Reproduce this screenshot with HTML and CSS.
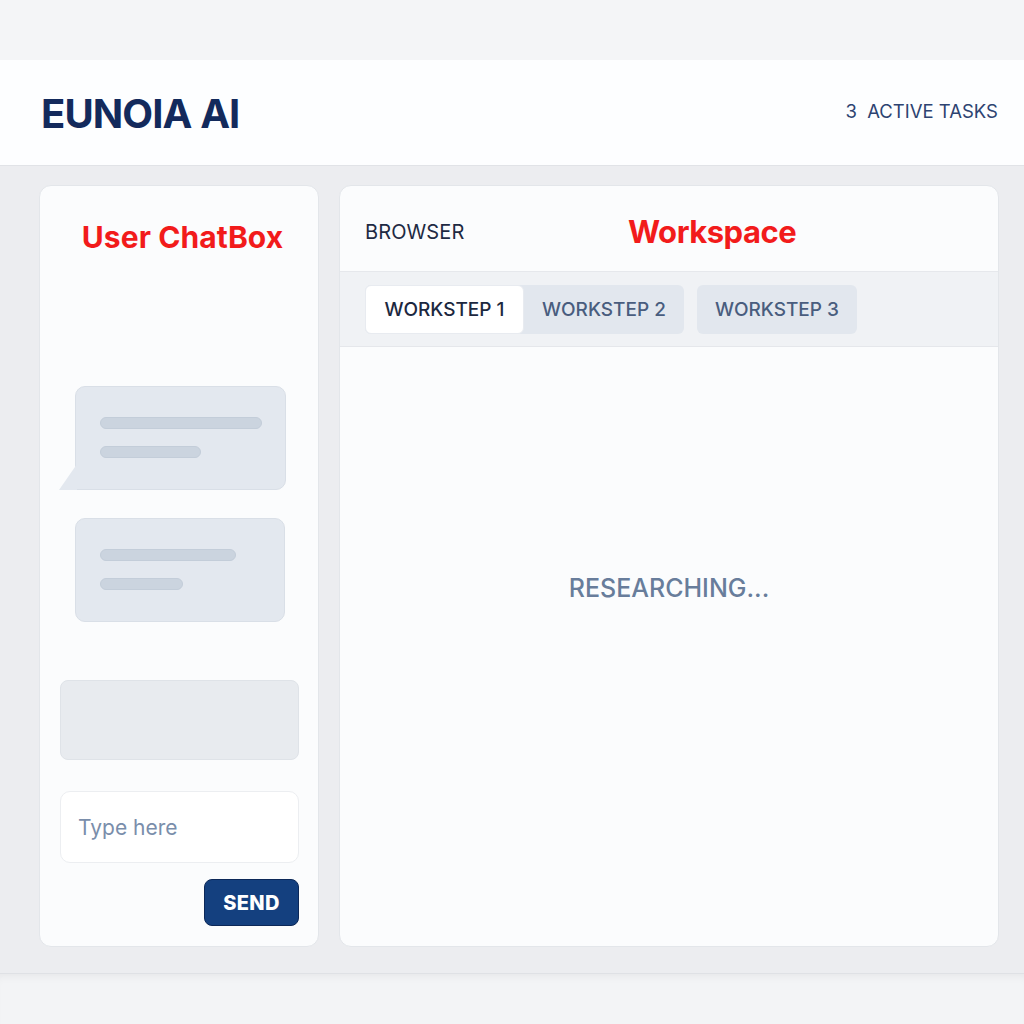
FILE: index.html
```html
<!DOCTYPE html>
<html>
<head>
<meta charset="utf-8">
<link rel="stylesheet" href="styles.css">
</head>
<body>
<div class="topstrip"></div>
<header class="header">
  <div class="brand">EUNOIA AI</div>
  <div class="tasks">3&nbsp;&nbsp;ACTIVE TASKS</div>
</header>
<main class="main">
  <section class="chat">
    <h2 class="chat-title">User ChatBox</h2>
    <div class="bubble bubble-tail">
      <span class="line l1"></span>
      <span class="line l2"></span>
    </div>
    <div class="bubble bubble-2">
      <span class="line l3"></span>
      <span class="line l4"></span>
    </div>
    <div class="draft"></div>
    <div class="input">Type here</div>
    <div class="send-row"><button class="send">SEND</button></div>
  </section>
  <section class="work">
    <div class="work-head">
      <span class="browser">BROWSER</span>
      <span class="work-title">Workspace</span>
    </div>
    <div class="tabs">
      <div class="tab-group">
        <div class="tab active">WORKSTEP 1</div>
        <div class="tab">WORKSTEP 2</div>
      </div>
      <div class="tab single">WORKSTEP 3</div>
    </div>
    <div class="work-body">
      <span class="status">RESEARCHING...</span>
    </div>
  </section>
</main>
<div class="footer"></div>
</body>
</html>
```
FILE: styles.css
```css
* { box-sizing: border-box; }
html, body { margin: 0; padding: 0; }
body {
  font-family: Inter, "Noto Sans", sans-serif;
  background: #f3f4f6;
  width: 1024px;
  height: 1024px;
  overflow: hidden;
}
.topstrip { height: 60px; background: #f4f5f7; }
.header {
  height: 106px;
  background: #fdfeff;
  border-bottom: 1px solid #e1e3e7;
  display: flex;
  align-items: center;
  justify-content: space-between;
  padding: 0 26px 0 41px;
}
.brand {
  font-size: 40px;
  font-weight: 700;
  color: #132a5c;
  letter-spacing: -0.9px;
  padding-top: 2px;
}
.tasks {
  font-size: 18.5px;
  color: #2d4371;
  letter-spacing: 0;
  padding-bottom: 3px;
}
.main {
  display: flex;
  gap: 20px;
  padding: 19px 25px 26px 39px;
  background: #ecedf0;
  border-bottom: 1px solid #dfe1e5;
  height: 808px;
}
.chat {
  width: 280px;
  background: #fbfcfd;
  border: 1px solid #e3e6ea;
  border-radius: 12px;
  padding: 0 19px 20px 20px;
  display: flex;
  flex-direction: column;
}
.chat-title {
  margin: 33px 0 0;
  text-align: center;
  font-size: 30px;
  font-weight: 700;
  color: #f21b1b;
  line-height: 36px;
  letter-spacing: 0.1px;
  padding-left: 6px;
}
.bubble {
  position: relative;
  width: 211px;
  height: 104px;
  margin-left: 15px;
  background: #e3e8ef;
  border: 1px solid #d9dfe7;
  border-radius: 10px;
  padding: 30px 0 0 24px;
  display: flex;
  flex-direction: column;
  gap: 17px;
}
.bubble-tail { margin-top: 131px; border-bottom-left-radius: 0; }
.bubble-tail::before {
  content: "";
  position: absolute;
  left: -17px;
  bottom: -1px;
  width: 18px;
  height: 26px;
  background: #e3e8ef;
  clip-path: polygon(100% 0, 100% 100%, 0 100%);
}
.bubble-2 { margin-top: 28px; width: 210px; }
.line {
  display: block;
  height: 12px;
  border-radius: 6px;
  background: #cbd4df;
  border: 1px solid #c3cdd9;
}
.l1 { width: 162px; }
.l2 { width: 101px; }
.l3 { width: 136px; }
.l4 { width: 83px; }
.draft {
  margin-top: 58px;
  height: 80px;
  background: #e8ebef;
  border: 1px solid #dfe3e8;
  border-radius: 8px;
}
.input {
  margin-top: 31px;
  height: 72px;
  background: #ffffff;
  border: 1px solid #eceef1;
  border-radius: 10px;
  padding: 0 0 0 17px;
  display: flex;
  align-items: center;
  font-size: 21px;
  color: #7a8eab;
}
.send-row { display: flex; justify-content: flex-end; margin-top: 16px; }
.send {
  width: 95px;
  height: 47px;
  background: #14407f;
  border: 1px solid #0c2858;
  border-radius: 8px;
  color: #ffffff;
  font-family: Inter, "Noto Sans", sans-serif;
  font-size: 20px;
  font-weight: 800;
  letter-spacing: 0.3px;
  padding: 0;
}
.work {
  flex: 1;
  background: #fbfcfd;
  border: 1px solid #e3e6ea;
  border-radius: 12px;
  display: flex;
  flex-direction: column;
  overflow: hidden;
}
.work-head {
  height: 86px;
  display: flex;
  align-items: center;
  padding: 6px 0 0 25px;
  border-bottom: 1px solid #e6e8ec;
}
.browser {
  font-size: 20px;
  color: #1e2a43;
  letter-spacing: 0.1px;
  width: 263px;
}
.work-title {
  font-size: 31px;
  font-weight: 700;
  color: #f21b1b;
  letter-spacing: -0.5px;
}
.tabs {
  height: 75px;
  background: #f0f2f5;
  border-bottom: 1px solid #e5e7eb;
  display: flex;
  align-items: center;
  gap: 13px;
  padding: 0 25px;
}
.tab-group {
  display: flex;
  background: #e2e7ee;
  border-radius: 6px;
}
.tab {
  height: 49px;
  width: 160px;
  display: flex;
  align-items: center;
  justify-content: center;
  font-size: 19px;
  font-weight: 500;
  color: #495d7e;
  border-radius: 6px;
}
.tab.active {
  width: 159px;
  background: #ffffff;
  color: #1c2840;
  border: 1px solid #e8ebf0;
}
.tab.single { background: #e2e7ee; }
.work-body {
  flex: 1;
  display: flex;
  align-items: center;
  justify-content: center;
  padding-bottom: 118px;
}
.status {
  font-size: 25px;
  font-weight: 500;
  color: #687d9b;
  letter-spacing: 0;
}
.footer { height: 50px; background: #f3f4f6; box-shadow: inset 0 8px 10px -6px rgba(0,0,0,0.06); }
```
